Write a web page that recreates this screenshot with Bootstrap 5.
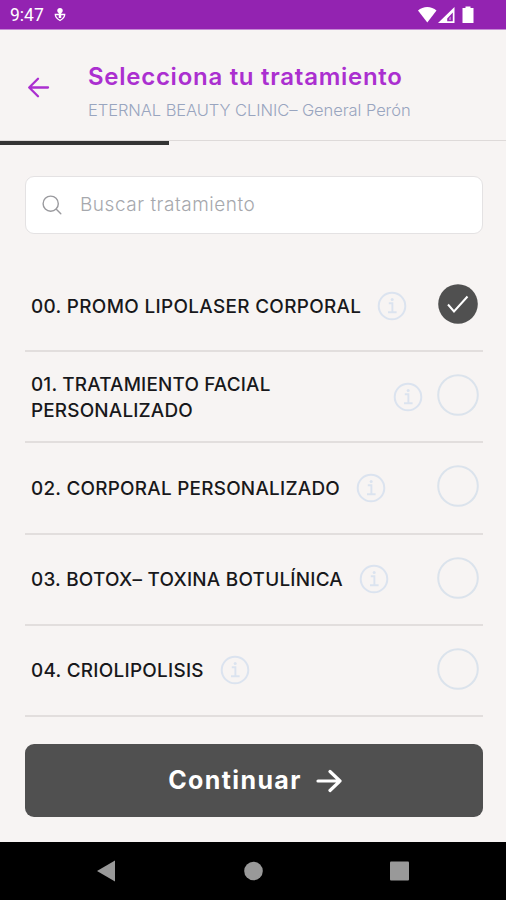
<!DOCTYPE html>
<html lang="es">
<head>
<meta charset="utf-8">
<meta name="viewport" content="width=device-width, initial-scale=1">
<title>Selecciona tu tratamiento</title>
<link href="https://cdn.jsdelivr.net/npm/bootstrap@5.3.0/dist/css/bootstrap.min.css" rel="stylesheet">
<style>
body{font-family:Inter,"Liberation Sans",sans-serif;background:#f7f4f3;height:900px;overflow:hidden}
svg{display:block;flex:none}
.status-bar{height:30px;background:#9323b1;border-bottom:1px solid #c58bd4;padding:1px 32px 0 10px;font:400 17.5px/30px Roboto,sans-serif}
.mic-icon{margin-left:10px}
.top-head{height:110px;padding-left:27px}
.back-icon{margin-top:46px}
.head-copy{margin-left:38px}
.head-title{font-size:24px;line-height:30px;font-weight:600;color:#ab2fd0;letter-spacing:.73px;margin:0;padding-top:32px}
.head-sub{font-size:16.5px;line-height:22px;font-weight:300;color:#99a5bf;letter-spacing:-.07px;padding-top:7px}
.step-track{height:5px;border-top:1px solid #dedad9}
.step-fill{width:169px;height:4px;background:#343434}
.search-box{margin:31px 23px 0 25px;height:58px;border:1px solid #e4e2e3;border-radius:9px;padding-left:16px}
.search-box input{font-size:19px;font-weight:300;padding:1px 0 0 17px;letter-spacing:.52px}
.search-box input::placeholder{color:#a6a8ad;opacity:1}
.treatments{margin:27px 23px 0 25px}
.treatment{height:91.2px;border-bottom:2px solid #e2dedd;padding:0 4px 0 6px}
.treatment-name{font-size:18.9px;line-height:26px;font-weight:500;color:#18181b;white-space:nowrap;padding-top:2px}
.info-icon{margin-left:16px}
.pick{margin-top:-3px}
.pick-near{margin-left:14px}
.cta{margin:27px 23px 0 25px;height:73.5px;background:#505050;border-radius:9px;color:#fff;font-size:25px;font-weight:700;letter-spacing:1.4px;border:0;padding-left:8px}
.cta-arrow{margin-left:14px}
.system-nav{height:58px;background:#000}
.n0{letter-spacing:.34px}.n1{letter-spacing:.18px}.n2{letter-spacing:.25px}.n3{letter-spacing:.25px}.n4{letter-spacing:.28px}
</style>
</head>
<body class="d-flex flex-column">
<svg width="0" height="0" class="position-absolute" aria-hidden="true">
<symbol id="info" viewBox="0 0 30 30"><g fill="none" stroke="#dbe3ef"><circle cx="15" cy="15" r="13.3" stroke-width="2"/><path d="M11.8 12.3h3.600v8.800M11 21.300h8.600" stroke-width="1.900"/></g><circle cx="15.200" cy="8.400" r="1.500" fill="#dbe3ef"/></symbol>
<symbol id="ring" viewBox="0 0 42 42"><circle cx="21" cy="21" r="19.800" fill="none" stroke="#dbe3ec" stroke-width="2"/></symbol>
</svg>
<div class="status-bar d-flex align-items-center text-white flex-shrink-0">
<span>9:47</span>
<svg class="mic-icon" width="12" height="16" viewBox="0 0 12 16"><circle cx="6" cy="3.600" r="2.700" fill="#fff"/><path d="M6 4v7" stroke="#fff" stroke-width="2.500"/><path d="M1.300 7.500h9.400c0 2.500-2 4.500-4.700 6-2.700-1.500-4.700-3.500-4.700-6z" fill="none" stroke="#fff" stroke-width="1.300"/></svg>
<svg class="ms-auto" width="56" height="20" viewBox="0 0 56 20"><path d="M0 5.500C5 .8 13.500.8 18.500 5.500L9.300 17.500z" fill="#fff"/><path fill="#fff" fill-rule="evenodd" d="M36.500 2v16H20zM34.800 7.500v8.700h-5.600v-2.800z"/><path d="M31.200 15v-2l1.600-1.600V15z" fill="#c58bd4"/><path d="M47.500 1.500h5v1.500h3v15h-11V3h3z" fill="#fff"/></svg>
</div>
<header class="top-head d-flex flex-shrink-0">
<svg class="back-icon" width="23" height="23" viewBox="0 0 23 23"><path d="M21 11.500H2.500M11 2.700 2.200 11.500l8.800 8.800" fill="none" stroke="#ab2fd0" stroke-width="2.300" stroke-linecap="round" stroke-linejoin="round"/></svg>
<div class="head-copy text-nowrap"><h1 class="head-title">Selecciona tu tratamiento</h1><div class="head-sub">ETERNAL BEAUTY CLINIC– General Perón</div></div>
</header>
<div class="step-track flex-shrink-0"><div class="step-fill"></div></div>
<label class="search-box d-flex align-items-center bg-white flex-shrink-0">
<svg width="21" height="21" viewBox="0 0 21 21"><g fill="none" stroke="#9a9a9e" stroke-width="1.400"><circle cx="8.700" cy="8.700" r="7.600"/><path d="m14.300 14.300 4.500 4.500" stroke-linecap="round"/></g></svg>
<input class="form-control border-0 bg-transparent shadow-none" type="text" placeholder="Buscar tratamiento">
</label>
<main class="treatments flex-shrink-0">
<div class="treatment d-flex align-items-center"><span class="treatment-name n0">00. PROMO LIPOLASER CORPORAL</span><svg class="info-icon" width="30" height="30"><use href="#info"/></svg><svg class="pick ms-auto" width="42" height="42" viewBox="0 0 42 42"><circle cx="21" cy="21" r="19.800" fill="#505050"/><path d="m11 21.500 6 7 13.500-15" fill="none" stroke="#fff" stroke-width="2"/></svg></div>
<div class="treatment d-flex align-items-center"><span class="treatment-name n1">01. TRATAMIENTO FACIAL<br>PERSONALIZADO</span><svg class="info-icon ms-auto" width="30" height="30"><use href="#info"/></svg><svg class="pick pick-near" width="42" height="42"><use href="#ring"/></svg></div>
<div class="treatment d-flex align-items-center"><span class="treatment-name n2">02. CORPORAL PERSONALIZADO</span><svg class="info-icon" width="30" height="30"><use href="#info"/></svg><svg class="pick ms-auto" width="42" height="42"><use href="#ring"/></svg></div>
<div class="treatment d-flex align-items-center"><span class="treatment-name n3">03. BOTOX– TOXINA BOTULÍNICA</span><svg class="info-icon" width="30" height="30"><use href="#info"/></svg><svg class="pick ms-auto" width="42" height="42"><use href="#ring"/></svg></div>
<div class="treatment d-flex align-items-center"><span class="treatment-name n4">04. CRIOLIPOLISIS</span><svg class="info-icon" width="30" height="30"><use href="#info"/></svg><svg class="pick ms-auto" width="42" height="42"><use href="#ring"/></svg></div>
</main>
<button class="cta d-flex align-items-center justify-content-center flex-shrink-0" type="button">Continuar<svg class="cta-arrow" width="26" height="24" viewBox="0 0 26 24"><path d="M2 12h22M14 2.500l10 9.500-10 9.500" fill="none" stroke="#fff" stroke-width="3.200" stroke-linecap="round" stroke-linejoin="round"/></svg></button>
<nav class="system-nav mt-auto flex-shrink-0">
<svg width="506" height="58" viewBox="0 0 506 58" fill="#999"><path d="M97 29l18-10.500v21z"/><circle cx="253.500" cy="29" r="9.300"/><rect x="390" y="19.500" width="19" height="19" rx="1"/></svg>
</nav>
<script src="https://cdn.jsdelivr.net/npm/bootstrap@5.3.0/dist/js/bootstrap.bundle.min.js"></script>
</body>
</html>
